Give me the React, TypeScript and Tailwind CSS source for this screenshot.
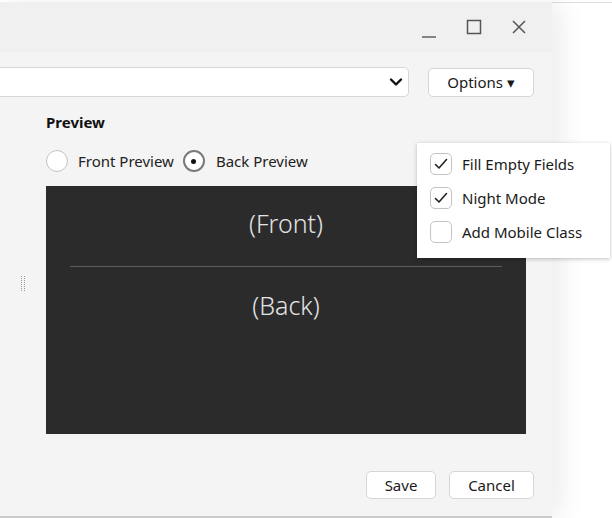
import React from "react";

const font = { fontFamily: '"Noto Sans", "Open Sans", sans-serif' };

function Check() {
  return (
    <svg width="16" height="16" viewBox="0 0 16 16" fill="none">
      <path d="M2.5 8.5 L6 12 L13.5 3.5" stroke="#222" strokeWidth="1.6" strokeLinecap="round" strokeLinejoin="round" />
    </svg>
  );
}

function CheckItem({ label, checked }: { label: string; checked: boolean }) {
  return (
    <div className="flex items-center h-[34px] pl-[13px]">
      <div className="w-[22px] h-[22px] rounded-[5px] border border-[#c4c4c4] bg-white flex items-center justify-center">
        {checked && <Check />}
      </div>
      <span className="ml-[10px] text-[15px] text-[#1a1a1a]">{label}</span>
    </div>
  );
}

export default function App() {
  return (
    <div className="w-[612px] h-[518px] bg-white overflow-hidden relative pt-[2px] flex" style={font}>
      <div className="w-[552px] h-[516px] shrink-0 flex flex-col bg-[#f4f4f4] border-b-2 border-[#cbcbcb] shadow-[10px_0_24px_rgba(0,0,0,0.07)] relative z-10">
        {/* title bar */}
        <div className="h-[50px] bg-[#f0f0f0] flex items-center justify-end pr-[25px] gap-[29px]">
          <svg width="16" height="16" viewBox="0 0 16 16" className="mt-[8px]">
            <line x1="1" y1="14" x2="15" y2="14" stroke="#555" strokeWidth="1.4" />
          </svg>
          <svg width="16" height="16" viewBox="0 0 16 16">
            <rect x="1.5" y="1.5" width="13" height="13" fill="none" stroke="#555" strokeWidth="1.5" />
          </svg>
          <svg width="16" height="16" viewBox="0 0 16 16">
            <path d="M2 2 L14 14 M14 2 L2 14" stroke="#555" strokeWidth="1.5" />
          </svg>
        </div>
        {/* toolbar row */}
        <div className="flex items-center mt-[15px] pr-[18px]">
          <div className="ml-[-10px] w-[420px] h-[30px] bg-white border border-[#d6d6d6] rounded-[5px] flex items-center justify-end pr-[4px]">
            <svg width="16" height="16" viewBox="0 0 16 16">
              <path d="M3 5.5 L8 10.5 L13 5.5" fill="none" stroke="#111" strokeWidth="2.4" strokeLinecap="round" strokeLinejoin="round" />
            </svg>
          </div>
          <button className="ml-[19px] w-[106px] h-[29px] bg-white border border-[#d6d6d6] rounded-[5px] text-[15px] text-[#1a1a1a] flex items-center justify-center">
            Options ▾
          </button>
        </div>
        {/* body */}
        <div className="flex flex-1 mt-[15px]">
          <div className="w-[46px] flex justify-center">
            <div className="grid grid-cols-2 gap-x-[2px] gap-y-[1px] mt-[164px] h-fit">
              {Array.from({ length: 16 }).map((_, i) => (
                <div key={i} className="w-[1px] h-[1px] bg-[#9a9a9a]" />
              ))}
            </div>
          </div>
          <div className="w-[480px] flex flex-col">
            <div className="text-[15px] font-bold text-[#111] h-[20px] leading-[20px]">Preview</div>
            <div className="flex items-center mt-[17px] h-[24px]">
              <div className="w-[22px] h-[22px] rounded-full border border-[#c4c4c4] bg-white" />
              <span className="ml-[10px] text-[15px] text-[#222]">Front Preview</span>
              <div className="ml-[9px] w-[22px] h-[22px] rounded-full border-2 border-[#7a7a7a] bg-white flex items-center justify-center">
                <div className="w-[5px] h-[5px] rounded-full bg-[#111]" />
              </div>
              <span className="ml-[11px] text-[15px] text-[#222]">Back Preview</span>
            </div>
            <div className="mt-[13px] h-[248px] bg-[#2b2b2b] flex flex-col items-center pt-[21px]">
              <div className="text-[25px] leading-[32px] text-[#e4e4e4] font-light">(Front)</div>
              <div className="w-[432px] h-[1px] bg-[#5c5c5c] mt-[27px]" />
              <div className="text-[25px] leading-[32px] text-[#e4e4e4] font-light mt-[22px]">(Back)</div>
            </div>
            <div className="flex justify-end gap-[13px] mt-[37px] mr-[-8px]">
              <button className="w-[70px] h-[28px] bg-white border border-[#d6d6d6] rounded-[5px] text-[15px] text-[#1a1a1a]">Save</button>
              <button className="w-[85px] h-[28px] bg-white border border-[#d6d6d6] rounded-[5px] text-[15px] text-[#1a1a1a]">Cancel</button>
            </div>
          </div>
        </div>
      </div>
      <div className="flex-1 border-t border-[#dedede]" />
      {/* dropdown menu overlay */}
      <div className="absolute left-[417px] top-[143px] w-[193px] h-[115px] bg-white shadow-[0_1px_4px_rgba(0,0,0,0.25)] z-20 pt-[4px]">
        <CheckItem label="Fill Empty Fields" checked />
        <CheckItem label="Night Mode" checked />
        <CheckItem label="Add Mobile Class" checked={false} />
      </div>
    </div>
  );
}
